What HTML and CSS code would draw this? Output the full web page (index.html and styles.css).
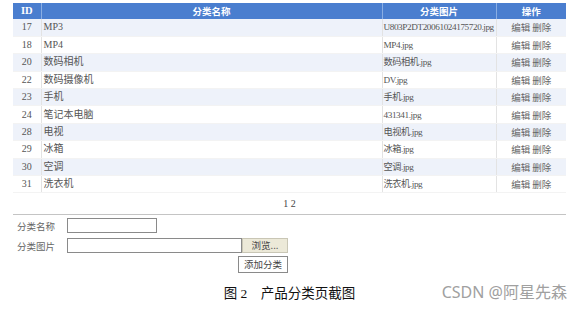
FILE: index.html
```html
<!doctype html>
<html>
<head>
    <title>产品分类</title>
    <meta charset="utf-8">
    <link rel="stylesheet" href="styles.css">
</head>
<body>
    <div id="page">
        <table class="list">
            <thead>
                <tr>
                    <th class="c-id">ID</th>
                    <th class="c-name">分类名称</th>
                    <th class="c-pic">分类图片</th>
                    <th class="c-ops">操作</th>
                </tr>
            </thead>
            <tbody>
                <tr><td class="c-id">17</td><td>MP3</td><td>U803P2DT20061024175720.jpg</td><td class="c-ops">编辑 删除</td></tr>
                <tr><td class="c-id">18</td><td>MP4</td><td>MP4.jpg</td><td class="c-ops">编辑 删除</td></tr>
                <tr><td class="c-id">20</td><td>数码相机</td><td>数码相机.jpg</td><td class="c-ops">编辑 删除</td></tr>
                <tr><td class="c-id">22</td><td>数码摄像机</td><td>DV.jpg</td><td class="c-ops">编辑 删除</td></tr>
                <tr><td class="c-id">23</td><td>手机</td><td>手机.jpg</td><td class="c-ops">编辑 删除</td></tr>
                <tr><td class="c-id">24</td><td>笔记本电脑</td><td>431341.jpg</td><td class="c-ops">编辑 删除</td></tr>
                <tr><td class="c-id">28</td><td>电视</td><td>电视机.jpg</td><td class="c-ops">编辑 删除</td></tr>
                <tr><td class="c-id">29</td><td>冰箱</td><td>冰箱.jpg</td><td class="c-ops">编辑 删除</td></tr>
                <tr><td class="c-id">30</td><td>空调</td><td>空调.jpg</td><td class="c-ops">编辑 删除</td></tr>
                <tr><td class="c-id">31</td><td>洗衣机</td><td>洗衣机.jpg</td><td class="c-ops">编辑 删除</td></tr>
            </tbody>
        </table>
        <div class="pager">1 2</div>

        <div class="form">
            <div class="form-row">
                <span class="label">分类名称</span>
                <span class="input short"></span>
            </div>
            <div class="form-row">
                <span class="label">分类图片</span>
                <span class="input long"></span>
                <span class="btn browse">浏览...</span>
            </div>
            <div class="form-row submit">
                <span class="btn add">添加分类</span>
            </div>
        </div>

        <div class="caption">图 2　产品分类页截图</div>
        <div class="mark">CSDN @阿星先森</div>
    </div>
</body>
</html>
```

FILE: styles.css
```css
body {
    margin: 0;
    background: #fff;
    font-family: "Liberation Serif", "Noto Sans CJK SC", serif;
}

#page {
    position: relative;
    width: 582px;
    height: 309px;
    padding: 3px 0 0 13px;
    box-sizing: border-box;
}

/* list */
.list {
    width: 553px;
    border-collapse: collapse;
    table-layout: fixed;
    font-size: 10px;
    color: #555;
}

.list th {
    box-sizing: border-box;
    height: 16px;
    padding: 0;
    line-height: 14px;
    background: #4a7ecf;
    color: #fff;
    font-family: "Noto Sans CJK SC", sans-serif;
    font-size: 9.5px;
    font-weight: bold;
    text-align: center;
    border-left: 1px solid #8aaee3;
}

.list th:first-child {
    border-left: none;
    font-family: "Liberation Serif", serif;
    font-size: 10.5px;
}

.list td {
    box-sizing: border-box;
    height: 17.4px;
    padding: 0 0 0 2px;
    line-height: 14px;
    border-left: 1px solid #e3e3e3;
    border-bottom: 1px solid #f3f3f3;
    white-space: nowrap;
    overflow: hidden;
}

.list td:first-child {
    border-left: none;
}

.list tbody tr:nth-child(odd) td {
    background: #eef2fa;
}

.c-id {
    width: 28px;
    text-align: center;
}

.list td.c-id {
    padding: 0;
}

.c-name {
    width: 341px;
}

.c-pic {
    width: 114px;
}

.list td:nth-child(3) {
    padding-left: 1px;
    font-size: 9.2px;
    letter-spacing: -0.4px;
}

.c-ops {
    width: 70px;
}

.list td.c-ops {
    padding: 0;
    text-align: center;
    font-family: "Noto Sans CJK SC", sans-serif;
    font-size: 9.5px;
    color: #666;
}

.pager {
    width: 553px;
    height: 21px;
    line-height: 22px;
    border-bottom: 1px solid #c4c4c4;
    text-align: center;
    font-size: 10px;
    color: #444;
}

/* form */
.form {
    display: flex;
    flex-direction: column;
    padding: 3px 0 0 4px;
    font-family: "Noto Sans CJK SC", sans-serif;
    font-size: 9.5px;
    color: #666;
}

.form-row {
    display: flex;
    align-items: center;
    height: 15px;
    margin-top: 5px;
}

.form-row:first-child {
    margin-top: 0;
}

.label {
    width: 50px;
}

.input {
    display: block;
    height: 13px;
    border: 1px solid #8a8a8a;
    background: #fff;
}

.input.short {
    width: 88px;
}

.input.long {
    width: 173px;
}

.btn {
    display: block;
    box-sizing: border-box;
    height: 15px;
    line-height: 12px;
    text-align: center;
    border: 1px solid #8a8a8a;
    color: #444;
}

.btn.browse {
    width: 46px;
    background: #ece9d8;
    border-color: #c9c6b5;
}

.form-row.submit {
    height: 17px;
    margin-top: 3px;
    padding-left: 221px;
}

.btn.add {
    width: 50px;
    height: 17px;
    line-height: 14px;
    background: #fff;
}

.caption {
    margin-top: 12px;
    width: 553px;
    text-align: center;
    font-size: 13.5px;
    line-height: 18px;
    color: #111;
}

.mark {
    position: absolute;
    right: 15px;
    bottom: 6px;
    font-family: "Noto Sans", "Noto Sans CJK SC", sans-serif;
    font-size: 16px;
    color: #a0a0a0;
}
```
